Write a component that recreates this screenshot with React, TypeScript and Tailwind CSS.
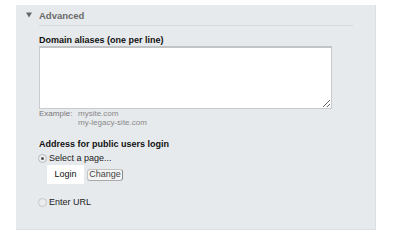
export default function App() {
  return (
    <main className="w-[400px] h-[244px] bg-white pt-[5px] pl-[16px]" style={{ fontFamily: '"Liberation Sans", Arial, sans-serif' }}>
      <div className="w-[360px] h-[225px] bg-[#e7eaed] border-r border-b border-[#dcdfe2] pl-[23px] pr-[22px]">
        <div className="flex items-center h-[20px] -ml-[13px]">
          <svg width="13" height="6" viewBox="0 0 13 6" className="shrink-0">
            <polygon points="0,0.5 6,0.5 3,5.5" fill="#666" />
          </svg>
          <span className="text-[9.5px] font-bold text-[#6a6a6a] leading-[11px]">Advanced</span>
        </div>
        <div className="border-t border-[#d6d9dc]" />
        <div className="pt-[9px]">
          <div className="text-[9px] font-bold text-[#111] leading-[11px]">Domain aliases (one per line)</div>
          <textarea className="block w-[293px] h-[63px] bg-white border border-[#c9cbcd] border-t-[2px] border-t-[#c2c4c6] resize" />
          <div className="flex text-[8px] text-[#888] leading-[9px] -mt-[2px] pt-[2px]">
            <span className="w-[39px] shrink-0 text-[#777]">Example:</span>
            <div>
              <div>mysite.com</div>
              <div>my-legacy-site.com</div>
            </div>
          </div>
        </div>
        <div className="pt-[12px]">
          <div className="text-[9px] font-bold text-[#111] leading-[11px]">Address for public users login</div>
          <label className="flex items-center text-[9px] text-[#222] leading-[11px] mt-[3px] -ml-[1px]">
            <span className="w-[9px] h-[9px] rounded-full border border-[#b7b9bb] bg-[#efefef] flex items-center justify-center mr-[2px] shrink-0">
              <span className="w-[3px] h-[3px] rounded-full bg-[#555]" />
            </span>
            Select a page...
          </label>
          <div className="flex items-center ml-[8px] mt-[1px]">
            <div className="w-[37px] h-[19px] bg-white text-[9px] text-[#111] flex items-center justify-center">Login</div>
            <button className="ml-[3px] w-[36px] h-[12px] text-[9px] leading-[9px] text-[#444] bg-[#f4f4f4] border border-[#c4c4c4] border-r-[#888] border-b-[#aaa] rounded-[3px]">Change</button>
          </div>
          <label className="flex items-center text-[9px] text-[#222] leading-[11px] mt-[13px] -ml-[1px]">
            <span className="w-[9px] h-[9px] rounded-full border border-[#c4c6c8] bg-[#ececec] mr-[2px] shrink-0" />
            Enter URL
          </label>
        </div>
      </div>
    </main>
  );
}
